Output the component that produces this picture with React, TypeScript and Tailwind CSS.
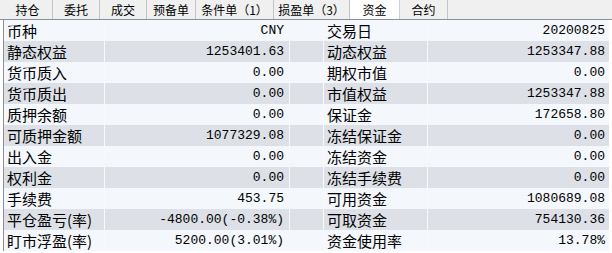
const tabs = [
  { label: "持仓", w: "w-[50px]" },
  { label: "委托", w: "w-[47px]" },
  { label: "成交", w: "w-[47px]" },
  { label: "预备单", w: "w-[49px]" },
  { label: "条件单（1）", w: "w-[78px]" },
  { label: "损盈单（3）", w: "w-[76px]" },
  { label: "资金", w: "w-[50px]", active: true },
  { label: "合约", w: "w-[48px]" },
];

const rows = [
  ["币种", "CNY", "交易日", "20200825"],
  ["静态权益", "1253401.63", "动态权益", "1253347.88"],
  ["货币质入", "0.00", "期权市值", "0.00"],
  ["货币质出", "0.00", "市值权益", "1253347.88"],
  ["质押余额", "0.00", "保证金", "172658.80"],
  ["可质押金额", "1077329.08", "冻结保证金", "0.00"],
  ["出入金", "0.00", "冻结资金", "0.00"],
  ["权利金", "0.00", "冻结手续费", "0.00"],
  ["手续费", "453.75", "可用资金", "1080689.08"],
  ["平仓盈亏(率)", "-4800.00(-0.38%)", "可取资金", "754130.36"],
  ["盯市浮盈(率)", "5200.00(3.01%)", "资金使用率", "13.78%"],
];

const cjk = "font-['SimSun','Noto_Sans_CJK_SC',sans-serif]";
const mono = "font-['Liberation_Mono','Noto_Sans_CJK_SC',monospace]";

export default function App() {
  return (
    <div className="w-[612px] h-[253px] overflow-hidden bg-white flex flex-col">
      {/* tab strip */}
      <div className="flex h-[20px] shrink-0 bg-[#f0f0f0] border-b border-[#8a8f99] pl-[3px]">
        {tabs.map((t) => (
          <div
            key={t.label}
            className={`${t.w} ${cjk} h-full flex items-center justify-center text-[12px] leading-none text-black border-r ${
              t.active ? "bg-white border-[#d0d0d0]" : "border-[#c4c4c4]"
            }`}
          >
            {t.label}
          </div>
        ))}
      </div>

      {/* fund table */}
      <div className="flex flex-col border-l border-[#8a8f99] ml-[3px] w-[606px]">
        {rows.map((r, i) => (
          <div
            key={r[0]}
            className={`flex h-[21px] shrink-0 ${
              i % 2 === 0 ? "bg-[#f4f7fb]" : "bg-[#dde1e7]"
            }`}
          >
            <div
              className={`${cjk} w-[101px] pl-[3px] flex items-center text-[15px] leading-none text-black border-r border-[#f7f9fc]`}
            >
              {r[0]}
            </div>
            <div
              className={`${mono} w-[185px] pr-[5px] flex items-center justify-end text-[13px] leading-none text-black border-r border-[#f7f9fc]`}
            >
              {r[1]}
            </div>
            <div className="w-[34px] border-r border-[#f7f9fc]" />
            <div
              className={`${cjk} w-[104px] pl-[3px] flex items-center text-[15px] leading-none text-black border-r border-[#f7f9fc]`}
            >
              {r[2]}
            </div>
            <div
              className={`${mono} flex-1 pr-[4px] flex items-center justify-end text-[13px] leading-none text-black`}
            >
              {r[3]}
            </div>
          </div>
        ))}
      </div>
    </div>
  );
}
